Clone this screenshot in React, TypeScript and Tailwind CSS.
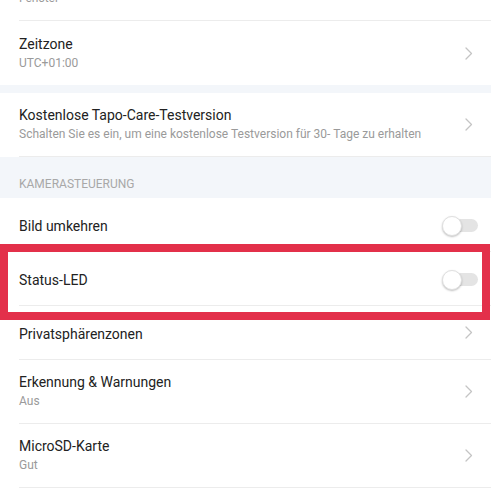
import React from "react";

const Chevron = () => (
  <svg width="8" height="13" viewBox="0 0 8 13" fill="none" className="shrink-0">
    <path d="M1 1 L6.5 6.5 L1 12" stroke="#c4c4c4" strokeWidth="1.3" strokeLinecap="round" strokeLinejoin="round" />
  </svg>
);

const Toggle = () => (
  <div className="relative w-[36px] h-[20px] shrink-0 flex items-center">
    <div className="ml-[2px] w-[34px] h-[13px] rounded-full bg-[#e4e4e4]" />
    <div className="absolute left-0 top-0 w-[20px] h-[20px] rounded-full bg-white border border-[#e0e0e0] shadow-[0_1px_2px_rgba(0,0,0,0.25)]" />
  </div>
);

function TwoLine({ title, sub, divider = true }: { title: string; sub: string; divider?: boolean }) {
  return (
    <div className="bg-white pl-[19px]">
      <div className={`h-[64px] flex items-center pr-[18px] ${divider ? "border-b border-[#ececec]" : ""}`}>
        <div className="flex-1 flex flex-col">
          <span className="text-[14px] leading-[19px] text-[#222]">{title}</span>
          <span className="text-[12px] leading-[17px] text-[#9a9a9a] mt-[1px]">{sub}</span>
        </div>
        <Chevron />
      </div>
    </div>
  );
}

function OneLine({ title, right }: { title: string; right: "chevron" | "toggle" }) {
  return (
    <div className="bg-white pl-[19px]">
      <div className={`h-[54px] flex items-center border-b border-[#ececec] ${right === "toggle" ? "pr-[13px]" : "pr-[18px]"}`}>
        <span className="flex-1 text-[14px] leading-[19px] text-[#222] pt-[3px]">{title}</span>
        {right === "chevron" ? <Chevron /> : <div className="pt-[2px]"><Toggle /></div>}
      </div>
    </div>
  );
}

export default function App() {
  return (
    <div
      className="relative w-[491px] h-[500px] overflow-hidden bg-white"
      style={{ fontFamily: "Roboto, 'Noto Sans', sans-serif" }}
    >
      <div className="-mt-[43px] flex flex-col">
        <TwoLine title="Display" sub="Fenster" />
        <TwoLine title="Zeitzone" sub="UTC+01:00" divider={false} />
        <div className="h-[8px] bg-[#f3f6fa]" />
        <TwoLine
          title="Kostenlose Tapo-Care-Testversion"
          sub="Schalten Sie es ein, um eine kostenlose Testversion für 30- Tage zu erhalten"
        />
        <div className="h-[41px] bg-[#f3f6fa] flex items-end pl-[19px] pb-[6px]">
          <span className="text-[12px] leading-[16px] text-[#a8a8a8] uppercase">Kamerasteuerung</span>
        </div>
        <OneLine title="Bild umkehren" right="toggle" />
        <OneLine title="Status-LED" right="toggle" />
        <OneLine title="Privatsphärenzonen" right="chevron" />
        <TwoLine title="Erkennung & Warnungen" sub="Aus" />
        <TwoLine title="MicroSD-Karte" sub="Gut" />
        <div className="h-[40px] bg-white" />
      </div>
      <div className="absolute left-0 top-[244px] w-[490px] h-[76px] border-[8px] border-[#e3304a] pointer-events-none" />
    </div>
  );
}
